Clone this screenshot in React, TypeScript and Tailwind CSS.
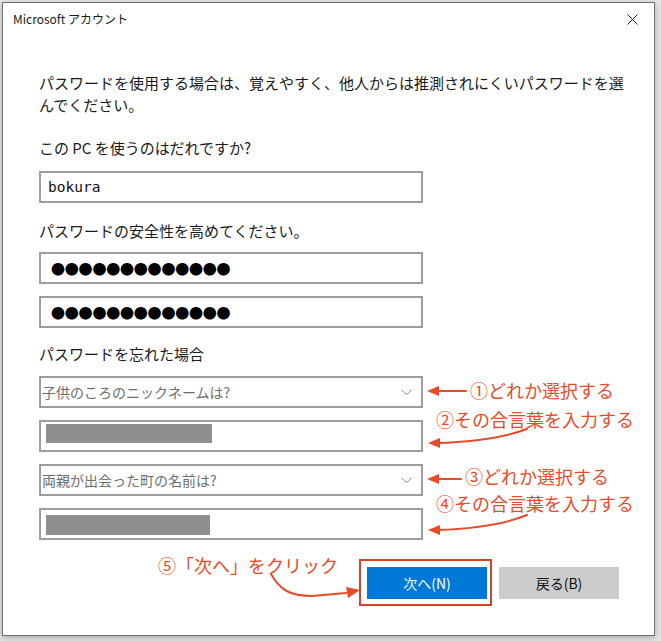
import React from "react";

const jp = { fontFamily: '"Noto Sans CJK JP", "Noto Sans", sans-serif' };

function Chevron() {
  return (
    <svg width="11" height="7" viewBox="0 0 11 7" className="shrink-0">
      <path d="M0.5 0.8 L5.5 5.8 L10.5 0.8" fill="none" stroke="#8a8a8a" strokeWidth="1" />
    </svg>
  );
}

function Select({ text }: { text: string }) {
  return (
    <div className="w-[384px] h-[32px] border-2 border-[#9d9d9d] flex items-center justify-between pl-[1px] pr-[9px]">
      <span className="text-[14px] text-[#6e6e6e] leading-none">{text}</span>
      <Chevron />
    </div>
  );
}

export default function App() {
  const red = "#e84a2a";
  return (
    <div className="relative w-[661px] h-[641px] overflow-hidden bg-[#e4e4e4]" style={jp}>
      <div className="ml-[2px] mt-[2px] w-[653px] h-[634px] border border-[#6f6f6f] bg-white shadow-[0_2px_6px_rgba(0,0,0,0.25)] flex flex-col">
        {/* title bar */}
        <div className="h-[32px] flex items-center justify-between pl-[10px] pr-[16px]">
          <span className="text-[12px] text-[#1a1a1a] leading-none">Microsoft アカウント</span>
          <svg width="11" height="11" viewBox="0 0 11 11">
            <path d="M0.5 0.5 L10.5 10.5 M10.5 0.5 L0.5 10.5" stroke="#222" strokeWidth="1" />
          </svg>
        </div>
        {/* content */}
        <div className="flex flex-col pl-[36px] pr-[35px] pt-[37px] text-[15px] text-[#1a1a1a] leading-[22px]">
          <p className="whitespace-nowrap">
            パスワードを使用する場合は、覚えやすく、他人からは推測されにくいパスワードを選
            <br />
            んでください。
          </p>
          <p className="mt-[21px]">この PC を使うのはだれですか?</p>
          <div className="mt-[12px] w-[384px] h-[32px] border-2 border-[#9d9d9d] flex items-center pl-[7px]">
            <span
              className="text-[14.5px] text-[#111] leading-none"
              style={{ fontFamily: '"DejaVu Sans Mono", monospace' }}
            >
              bokura
            </span>
          </div>
          <p className="mt-[17px]">パスワードの安全性を高めてください。</p>
          <div className="mt-[10px] w-[384px] h-[32px] border-2 border-[#9d9d9d] flex items-center pl-[10px]">
            <span className="text-[14px] leading-none tracking-[-0.2px] text-black">●●●●●●●●●●●●●</span>
          </div>
          <div className="mt-[12px] w-[384px] h-[32px] border-2 border-[#9d9d9d] flex items-center pl-[10px]">
            <span className="text-[14px] leading-none tracking-[-0.2px] text-black">●●●●●●●●●●●●●</span>
          </div>
          <p className="mt-[15px]">パスワードを忘れた場合</p>
          <div className="mt-[11px]">
            <Select text="子供のころのニックネームは?" />
          </div>
          <div className="mt-[12px] w-[384px] h-[32px] border-2 border-[#9d9d9d] pt-[2px] pl-[5px]">
            <div className="w-[166px] h-[19px] bg-[#8f8f8f]" />
          </div>
          <div className="mt-[12px]">
            <Select text="両親が出会った町の名前は?" />
          </div>
          <div className="mt-[12px] w-[384px] h-[32px] border-2 border-[#9d9d9d] pt-[5px] pl-[5px]">
            <div className="w-[164px] h-[20px] bg-[#8f8f8f]" />
          </div>
          <div className="mt-[27px] flex justify-end gap-[12px]">
            <button className="w-[120px] h-[32px] bg-[#0078d7] text-white text-[14px] leading-none">次へ(N)</button>
            <button className="w-[120px] h-[32px] bg-[#cccccc] text-[#111] text-[14px] leading-none">戻る(B)</button>
          </div>
        </div>
      </div>

      {/* annotations */}
      <div className="absolute left-[359px] top-[559px] w-[133px] h-[47px] border-2 border-[#d5432b]" />
      <svg className="absolute inset-0 pointer-events-none" width="661" height="641">
        <g stroke={red} strokeWidth="2" fill="none" strokeLinecap="round">
          <path d="M466 391 L436 391" />
          <path d="M527 429 C505 437 472 442 437 443" />
          <path d="M461 479 L436 479" />
          <path d="M527 515 C505 524 472 529 437 530" />
          <path d="M271 574 C280 590 290 596 312 596 L346 593" />
        </g>
        <g fill={red}>
          <polygon points="427,391 439,386 439,396" />
          <polygon points="428,443 440,438 440,448" />
          <polygon points="427,479 439,474 439,484" />
          <polygon points="428,530 440,525 440,535" />
          <polygon points="360,590 346,587 348,598" />
        </g>
      </svg>
      <span className="absolute left-[470px] top-[378px] text-[18px] leading-[24px] whitespace-nowrap" style={{ color: red }}>
        ①どれか選択する
      </span>
      <span className="absolute left-[436px] top-[407px] text-[18px] leading-[24px] whitespace-nowrap" style={{ color: red }}>
        ②その合言葉を入力する
      </span>
      <span className="absolute left-[465px] top-[464px] text-[18px] leading-[24px] whitespace-nowrap" style={{ color: red }}>
        ③どれか選択する
      </span>
      <span className="absolute left-[436px] top-[491px] text-[18px] leading-[24px] whitespace-nowrap" style={{ color: red }}>
        ④その合言葉を入力する
      </span>
      <span className="absolute left-[158px] top-[553px] text-[18px] leading-[24px] whitespace-nowrap" style={{ color: red }}>
        ⑤「次へ」をクリック
      </span>
    </div>
  );
}
